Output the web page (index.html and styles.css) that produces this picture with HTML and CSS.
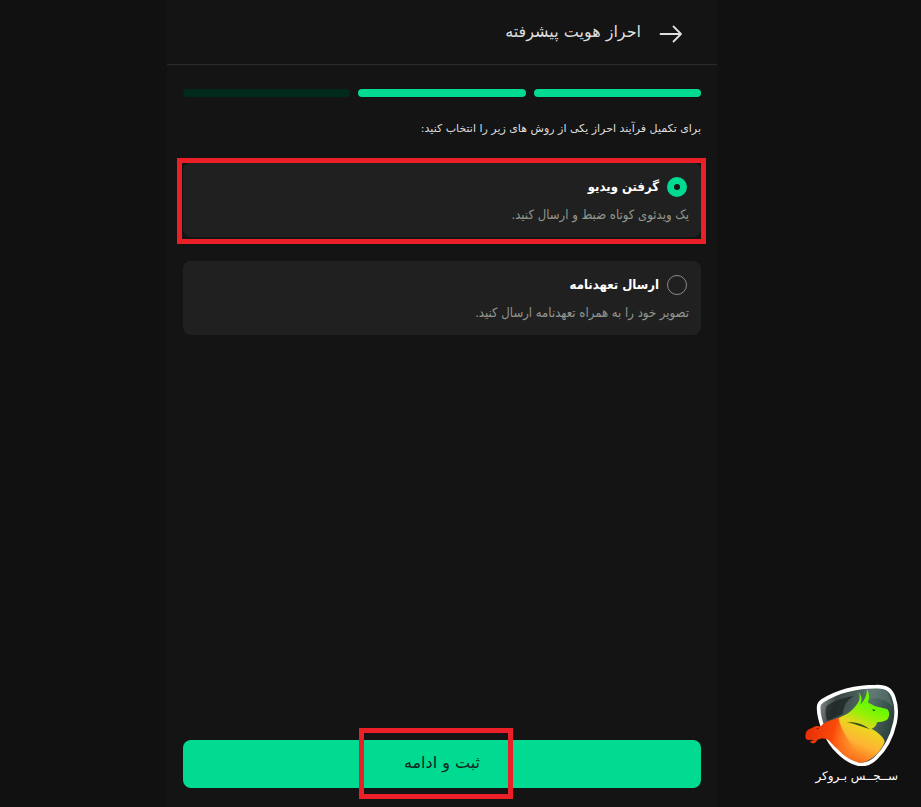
FILE: index.html
```
<!DOCTYPE html>
<html lang="fa" dir="rtl">
<head>
    <meta charset="UTF-8">
    <meta name="viewport" content="width=device-width, initial-scale=1.0">
    <title>احراز هویت پیشرفته</title>
    <link rel="stylesheet" href="styles.css">
</head>
<body>

    <div class="container">
        <header class="header">
            <button type="button" class="back" aria-label="بازگشت">
                <svg width="24" height="20" viewBox="0 0 24 20" fill="none" stroke="#dedede" stroke-width="1.8" stroke-linecap="round" stroke-linejoin="round">
                    <path d="M1.5 10H22M14.5 2.5L22 10L14.5 17.5"/>
                </svg>
            </button>
            <h1>احراز هویت پیشرفته</h1>
        </header>

        <form class="content">
            <!-- Steps -->
            <div class="steps">
                <span class="step done"></span>
                <span class="step done"></span>
                <span class="step"></span>
            </div>

            <p class="intro">برای تکمیل فرآیند احراز یکی از روش های زیر را انتخاب کنید:</p>

            <!-- Verification methods -->
            <label class="option marked">
                <span class="option-title">
                    <input type="radio" name="method" value="video" checked>
                    گرفتن ویدیو
                </span>
                <span class="option-text">یک ویدئوی کوتاه ضبط و ارسال کنید.</span>
            </label>

            <label class="option">
                <span class="option-title">
                    <input type="radio" name="method" value="letter">
                    ارسال تعهدنامه
                </span>
                <span class="option-text">تصویر خود را به همراه تعهدنامه ارسال کنید.</span>
            </label>

            <div class="actions">
                <button type="submit" class="submit">ثبت و ادامه</button>
            </div>
        </form>
    </div>

    <!-- Brand mark -->
    <div class="brand">
        <svg width="100" height="84" viewBox="36 36 300 252">
            <defs>
                <linearGradient id="shield" x1="0" y1="0.2" x2="1" y2="0.5">
                    <stop offset="0" stop-color="#8a9090"/>
                    <stop offset="0.2" stop-color="#3a4544"/>
                    <stop offset="0.6" stop-color="#55706a"/>
                    <stop offset="1" stop-color="#263b37"/>
                </linearGradient>
                <linearGradient id="animals" gradientUnits="userSpaceOnUse" x1="255" y1="115" x2="185" y2="275">
                    <stop offset="0" stop-color="#6cf800"/>
                    <stop offset="0.2" stop-color="#a0ee08"/>
                    <stop offset="0.4" stop-color="#eed222"/>
                    <stop offset="0.65" stop-color="#ffb434"/>
                    <stop offset="1" stop-color="#fb6418"/>
                </linearGradient>
                <linearGradient id="bear" gradientUnits="userSpaceOnUse" x1="60" y1="180" x2="195" y2="215">
                    <stop offset="0" stop-color="#e93206"/>
                    <stop offset="0.5" stop-color="#fa4a0a"/>
                    <stop offset="1" stop-color="#ff7a22" stop-opacity="0.2"/>
                </linearGradient>
            </defs>
            <path d="M86 112C86 102 90 97 98 92C142 65 195 50 258 50C290 49 303 60 311 82C320 106 321 130 315 158C306 198 286 238 258 264C242 280 224 285 207 283C165 274 122 232 101 180C92 156 85 132 86 112Z" fill="url(#shield)" stroke="#fff" stroke-width="11"/>
            <path d="M110 108C130 94 155 84 192 78C168 90 160 112 158 132L112 152C106 138 105 122 110 108Z" fill="#151d1c" opacity="0.65"/>
            <path d="M222 60C250 55 280 54 294 68L310 112C292 92 262 78 238 88Z" fill="#7b928d" opacity="0.3"/>
            <path d="M112 158C130 150 143 146 158 138C180 128 193 115 204 98C211 88 210 76 206 66C216 79 217 91 211 103C224 92 230 76 232 57C239 75 238 87 234 98C243 101 249 106 256 109L291 117C299 123 300 138 293 147C286 155 272 155 262 157C258 166 255 174 244 176C232 174 224 165 214 160C230 170 253 178 270 194C281 204 284 212 284 216C275 238 259 257 240 268C229 276 216 280 207 278C176 270 147 247 130 223Z" fill="url(#animals)"/>
            <path d="M47 205C45 192 48 184 54 179L78 168C84 167 87 169 91 170C99 161 108 156 122 151L146 144C152 180 177 217 226 275C219 279 211 279 204 277C178 267 157 250 146 238C136 235 128 223 115 210C102 204 90 204 81 211C78 219 72 223 63 218L60 213L75 211L61 209C54 211 49 210 47 205Z" fill="url(#bear)"/>
            <path d="M170 157C197 155 220 162 240 178C218 171 199 163 170 157Z" fill="#35501c"/>
            <path d="M246 118L257 120L251 124Z" fill="#184610"/>
            <path d="M79 174L87 175L82 178Z" fill="#651004"/>
        </svg>
        <span class="brand-name">ســجــس بـروکر</span>
    </div>

</body>
</html>
```

FILE: styles.css
```
*,
*::after {
    margin: 0;
    padding: 0;
    box-sizing: border-box;
}

body {
    min-height: 100vh;
    padding-right: 37px;
    background-color: #111111;
    color: #dedede;
    font-family: 'DejaVu Sans', sans-serif;
}

button {
    border: none;
    background: none;
    font-family: inherit;
    cursor: pointer;
}

.container {
    display: flex;
    flex-direction: column;
    max-width: 550px;
    min-height: 100vh;
    margin: 0 auto;
    background-color: #141414;
}

.header {
    display: flex;
    align-items: center;
    gap: 18px;
    height: 65px;
    padding: 0 34px;
    border-bottom: 1px solid #2b2b2b;
}

.back {
    display: flex;
    padding-top: 4px;
}

h1 {
    font-size: 16px;
    font-weight: normal;
    line-height: 24px;
}

.content {
    display: flex;
    flex: 1;
    flex-direction: column;
    padding: 24px 16px 19px;
}

.steps {
    display: flex;
    gap: 8px;
    margin-bottom: 20px;
}

.step {
    flex: 1;
    height: 8px;
    border-radius: 4px;
    background-color: #002a1c;
}

.step.done {
    background-color: #00db91;
}

.intro {
    margin-bottom: 22px;
    font-size: 11px;
    line-height: 24px;
}

.option {
    position: relative;
    display: block;
    margin-bottom: 24px;
    padding: 12px 12px 10px;
    border-radius: 8px;
    background-color: #202020;
    font-family: 'DejaVu Sans Condensed', 'DejaVu Sans', sans-serif;
    font-size: 13px;
    line-height: 24px;
    cursor: pointer;
}

.option-title {
    display: flex;
    align-items: center;
    gap: 8px;
    padding-right: 2px;
    color: #ffffff;
    font-weight: bold;
}

.option-title input {
    appearance: none;
    width: 20px;
    height: 20px;
    border: 1px solid #8a8a8a;
    border-radius: 50%;
}

.option-title input:checked {
    border: 7px solid #00db91;
    background-color: #141414;
}

.option-text {
    display: block;
    margin-top: 4px;
    color: #92968f;
}

/* red frames over the parts to click */
.marked::after,
.actions::after {
    content: "";
    position: absolute;
    border: 5px solid #ea1f27;
    pointer-events: none;
}

.marked::after {
    inset: -5px -5px -7px -6px;
}

.actions {
    position: relative;
    margin-top: auto;
}

.actions::after {
    top: -12px;
    bottom: -11px;
    left: 34%;
    width: 154px;
}

.submit {
    display: block;
    width: 100%;
    height: 48px;
    padding-bottom: 4px;
    border-radius: 8px;
    background-color: #00db91;
    color: #10281f;
    font-size: 16px;
}

.brand {
    position: absolute;
    right: 19px;
    bottom: 21px;
    width: 100px;
}

.brand svg {
    display: block;
}

.brand-name {
    display: block;
    padding-right: 4px;
    color: #ffffff;
    font-size: 12px;
    line-height: 20px;
    white-space: nowrap;
}
```
